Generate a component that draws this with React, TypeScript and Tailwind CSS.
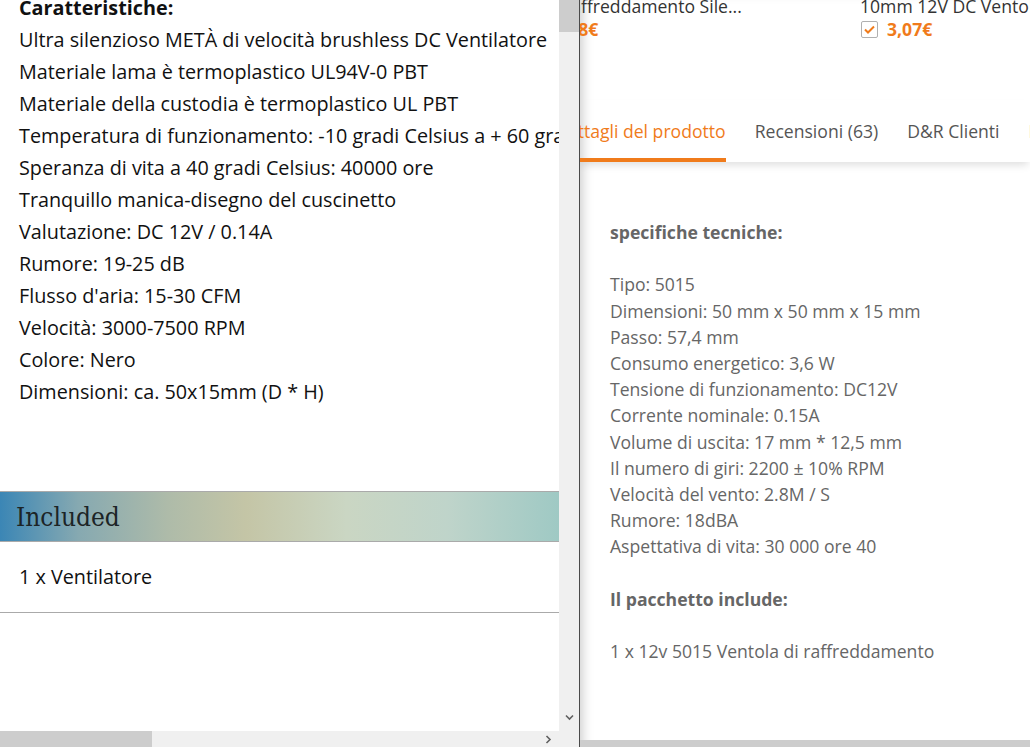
import React from "react";

const features = [
  "Ultra silenzioso METÀ di velocità brushless DC Ventilatore",
  "Materiale lama è termoplastico UL94V-0 PBT",
  "Materiale della custodia è termoplastico UL PBT",
  "Temperatura di funzionamento: -10 gradi Celsius a + 60 gradi Celsius",
  "Speranza di vita a 40 gradi Celsius: 40000 ore",
  "Tranquillo manica-disegno del cuscinetto",
  "Valutazione: DC 12V / 0.14A",
  "Rumore: 19-25 dB",
  "Flusso d'aria: 15-30 CFM",
  "Velocità: 3000-7500 RPM",
  "Colore: Nero",
  "Dimensioni: ca. 50x15mm (D * H)",
];

const specs = [
  "Tipo: 5015",
  "Dimensioni: 50 mm x 50 mm x 15 mm",
  "Passo: 57,4 mm",
  "Consumo energetico: 3,6 W",
  "Tensione di funzionamento: DC12V",
  "Corrente nominale: 0.15A",
  "Volume di uscita: 17 mm * 12,5 mm",
  "Il numero di giri: 2200 ± 10% RPM",
  "Velocità del vento: 2.8M / S",
  "Rumore: 18dBA",
  "Aspettativa di vita: 30 000 ore 40",
];

const tabs = ["Dettagli del prodotto", "Recensioni (63)", "D&R Clienti", "Pagamento e spedizione"];

function Chevron({ dir }: { dir: "down" | "right" }) {
  return (
    <svg width="9" height="9" viewBox="0 0 9 9" className={dir === "right" ? "-rotate-90" : ""}>
      <path d="M1 2.5 L4.5 6 L8 2.5" fill="none" stroke="#606060" strokeWidth="1.6" />
    </svg>
  );
}

function Check() {
  return (
    <span className="flex h-[17px] w-[17px] items-center justify-center rounded-[2px] border border-[#b0b0b0] bg-white">
      <svg width="11" height="9" viewBox="0 0 11 9">
        <path d="M1 4.5 L4 7.5 L10 1.5" fill="none" stroke="#f07b1b" strokeWidth="2" />
      </svg>
    </span>
  );
}

export default function App() {
  return (
    <div className="flex h-[747px] w-[1030px] overflow-hidden bg-white font-['Open_Sans',sans-serif]">
      {/* left document */}
      <div className="flex w-[559px] shrink-0 flex-col">
        <div className="h-[731px] overflow-hidden text-[19.8px] leading-[32px] text-[#111]">
          <div className="-mt-2 whitespace-nowrap px-[19px]">
            <p className="font-bold">Caratteristiche:</p>
            {features.map((f) => (
              <p key={f}>{f}</p>
            ))}
          </div>
          <div className="mt-[83px] border-y border-[#aaaaaa]">
            <div className="flex h-[49px] items-center bg-[linear-gradient(90deg,#3b86b5_0%,#86a9b1_14%,#aebba9_30%,#c4c5a6_44%,#cad6c3_62%,#bfd4ca_80%,#9fc9c4_100%)] pl-[16px] font-['DejaVu_Serif_Condensed','DejaVu_Serif',serif] text-[26px] text-[#1c2426]">
              Included
            </div>
          </div>
          <div className="border-b border-[#aaaaaa] px-[19px] py-[19px]">1 x Ventilatore</div>
        </div>
        <div className="flex h-[16px] items-center bg-[#f0f0f0]">
          <div className="h-full w-[152px] bg-[#cdcdcd]" />
          <div className="flex-1" />
          <div className="mr-[6px] flex items-center">
            <Chevron dir="right" />
          </div>
        </div>
      </div>

      {/* vertical scrollbar */}
      <div className="flex w-[20px] shrink-0 flex-col bg-[#f0f0f0]">
        <div className="h-[32px] bg-[#cdcdcd]" />
        <div className="flex-1" />
        <div className="mb-[25px] flex justify-center">
          <Chevron dir="down" />
        </div>
      </div>
      <div className="w-px shrink-0 bg-[#4a4a4a]" />

      {/* right page */}
      <div className="flex min-w-0 flex-1 flex-col overflow-hidden shadow-[inset_10px_0_12px_-8px_rgba(0,0,0,0.22)]">
        <div className="flex h-[100px] whitespace-nowrap text-[17.6px] text-[#333]">
          <div className="w-[280px] shrink-0">
            <p className="-mt-[7px] -ml-[16px] leading-[26px]">raffreddamento Sile...</p>
            <div className="-ml-[53px] -mt-[3px] flex items-center gap-[9px]">
              <Check />
              <span className="font-bold text-[#f07b1b]">3,48€</span>
            </div>
          </div>
          <div className="shrink-0">
            <p className="-mt-[7px] leading-[26px]">10mm 12V DC Ventola di raffreddamento</p>
            <div className="-mt-[3px] flex items-center gap-[9px] pl-px">
              <Check />
              <span className="font-bold text-[#f07b1b]">3,07€</span>
            </div>
          </div>
        </div>

        <div className="shadow-[0_5px_8px_-2px_rgba(0,0,0,0.13)]">
          <div className="-ml-[25px] flex gap-[29px] whitespace-nowrap pt-[19px] text-[17.6px] leading-[24px] text-[#555]">
            {tabs.map((t, i) => (
              <div
                key={t}
                className={
                  i === 0
                    ? "border-b-4 border-[#f07b1b] pb-[15px] text-[#f07b1b]"
                    : "border-b-4 border-transparent pb-[15px]"
                }
              >
                {t}
              </div>
            ))}
          </div>
        </div>

        <div className="flex-1 whitespace-nowrap pl-[30px] pt-[57px] text-[17.6px] leading-[26.2px] text-[#666]">
          <p className="font-bold">specifiche tecniche:</p>
          <br />
          {specs.map((s) => (
            <p key={s}>{s}</p>
          ))}
          <br />
          <p className="font-bold">Il pacchetto include:</p>
          <br />
          <p>1 x 12v 5015 Ventola di raffreddamento</p>
        </div>
        <div className="h-[7px] bg-[#cdcdcd]" />
      </div>
    </div>
  );
}
